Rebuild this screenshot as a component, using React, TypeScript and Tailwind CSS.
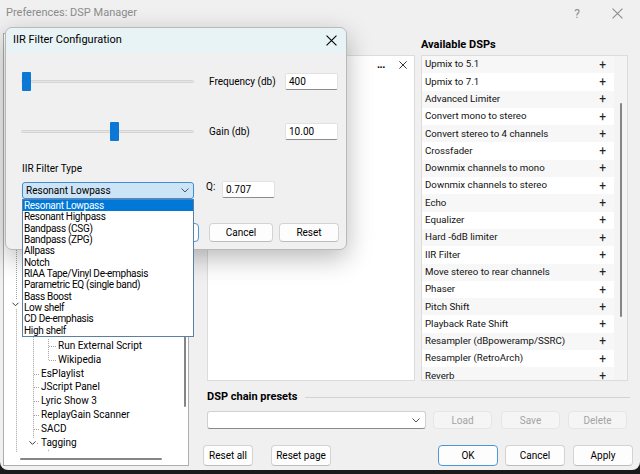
import React from 'react';

const availableDsps = [
  'Upmix to 5.1',
  'Upmix to 7.1',
  'Advanced Limiter',
  'Convert mono to stereo',
  'Convert stereo to 4 channels',
  'Crossfader',
  'Downmix channels to mono',
  'Downmix channels to stereo',
  'Echo',
  'Equalizer',
  'Hard -6dB limiter',
  'IIR Filter',
  'Move stereo to rear channels',
  'Phaser',
  'Pitch Shift',
  'Playback Rate Shift',
  'Resampler (dBpoweramp/SSRC)',
  'Resampler (RetroArch)',
  'Reverb',
];

const filterTypes = [
  'Resonant Lowpass',
  'Resonant Highpass',
  'Bandpass (CSG)',
  'Bandpass (ZPG)',
  'Allpass',
  'Notch',
  'RIAA Tape/Vinyl De-emphasis',
  'Parametric EQ (single band)',
  'Bass Boost',
  'Low shelf',
  'CD De-emphasis',
  'High shelf',
];

type TreeRow = { label: string; depth: 0 | 1 | 2 };

// the first 22 rows are hidden under the dialog and its dropdown, so they stay blank
const treeRows: TreeRow[] = [
  ...Array.from({ length: 22 }, () => ({ label: '', depth: 0 as const })),
  { label: 'Run External Script', depth: 2 },
  { label: 'Wikipedia', depth: 2 },
  { label: 'EsPlaylist', depth: 1 },
  { label: 'JScript Panel', depth: 1 },
  { label: 'Lyric Show 3', depth: 1 },
  { label: 'ReplayGain Scanner', depth: 1 },
  { label: 'SACD', depth: 1 },
  { label: 'Tagging', depth: 1 },
  { label: '', depth: 2 },
];

const indent = ['pl-[20px]', 'pl-[37px]', 'pl-[54px]'];

const ROW = 13.86;
const rowMid = (i: number) => ROW * i + ROW / 2;

const CloseIcon = ({ className = '' }: { className?: string }) => (
  <svg width="10" height="10" viewBox="0 0 10 10" className={className}>
    <path d="M0.5 0.5 L9.5 9.5 M9.5 0.5 L0.5 9.5" stroke="currentColor" strokeWidth="1" fill="none" />
  </svg>
);

const Chevron = ({ className = '' }: { className?: string }) => (
  <svg width="8" height="5" viewBox="0 0 8 5" className={className}>
    <path d="M0.5 0.5 L4 4 L7.5 0.5" stroke="currentColor" strokeWidth="1" fill="none" />
  </svg>
);

function TreeLines() {
  const dot = { stroke: '#a3a3a3', strokeWidth: 1, strokeDasharray: '1 1', fill: 'none' };
  const leaf1 = [24, 25, 26, 27, 28];
  const leaf2 = [22, 23];
  return (
    <svg className="pointer-events-none absolute left-0 top-0" width="180" height="418">
      <path d={`M12.5 0 V${rowMid(19) - 5} M12.5 ${rowMid(19) + 5} V418`} {...dot} />
      <path d={`M8.5 ${rowMid(19) - 1.5} L11.5 ${rowMid(19) + 1.5} L14.5 ${rowMid(19) - 1.5}`} stroke="#3a3a3a" strokeWidth="1" fill="none" />
      <path d={`M29.5 ${ROW * 20} V${rowMid(29) - 5}`} {...dot} />
      {leaf1.map((i) => (
        <path key={i} d={`M30 ${Math.round(rowMid(i)) + 0.5} H36`} {...dot} />
      ))}
      <path d={`M25.5 ${rowMid(29) - 1.5} L28.5 ${rowMid(29) + 1.5} L31.5 ${rowMid(29) - 1.5}`} stroke="#3a3a3a" strokeWidth="1" fill="none" />
      <path d={`M33 ${Math.round(rowMid(29)) + 0.5} H35`} {...dot} />
      <path d={`M44.5 ${ROW * 22} V${rowMid(23)}`} {...dot} />
      {leaf2.map((i) => (
        <path key={i} d={`M45 ${Math.round(rowMid(i)) + 0.5} H52`} {...dot} />
      ))}
      <path d={`M44.5 ${ROW * 30} V418`} {...dot} />
    </svg>
  );
}

function Tree() {
  return (
    <div className="mb-[4px] ml-[3px] mt-[6px] flex w-[186px] shrink-0 flex-col border border-[#adadad] bg-white">
      <div className="flex min-h-0 flex-1">
        <div className="relative min-w-0 flex-1 overflow-hidden">
          <TreeLines />
          {treeRows.map((r, i) => (
            <div
              key={i}
              className={`flex h-[13.86px] items-center whitespace-nowrap text-[10px] leading-none ${indent[r.depth]}`}
            >
              {r.label}
            </div>
          ))}
        </div>
        <div className="w-[5px] shrink-0">
          <div className="ml-[1px] mt-[216px] h-[157px] w-[2px] rounded-full bg-[#858585]" />
        </div>
      </div>
      <div className="flex h-[13px] shrink-0 items-center pl-[16px]">
        <div className="h-[2px] w-[142px] rounded-full bg-[#858585]" />
      </div>
    </div>
  );
}

function Btn({
  children,
  className = '',
  disabled = false,
  focused = false,
}: {
  children: React.ReactNode;
  className?: string;
  disabled?: boolean;
  focused?: boolean;
}) {
  const look = disabled
    ? 'border-[#e6e6e6] bg-[#f5f5f5] text-[#a3a3a3]'
    : focused
      ? 'border-[#4c98d6] bg-[#fdfdfd] text-black'
      : 'border-[#d3d3d3] border-b-[#bcbcbc] bg-[#fdfdfd] text-black';
  return (
    <div className={`flex shrink-0 items-center justify-center rounded-[4px] border text-[10px] ${look} ${className}`}>
      {children}
    </div>
  );
}

function RightPane() {
  return (
    <div className="flex min-w-0 flex-1 flex-col pl-[14px] pr-[7px]">
      <div className="flex gap-[6px] pl-[4px] pt-[11px]">
        <div className="w-[208px] shrink-0">
          {/* "Active DSPs" label and the active row's name sit under the dialog */}
          <div className="mb-[3px] h-[14px]" />
          <div className="h-[326px] border border-[#dcdcdc] bg-white">
            <div className="flex h-[17.3px] items-center justify-end pr-[7px]">
              <span className="mr-[14px] text-[11px] font-bold leading-none tracking-[-0.5px]">...</span>
              <CloseIcon className="h-[8px] w-[8px]" />
            </div>
          </div>
        </div>
        <div className="w-[207px] shrink-0">
          <div className="mb-[3px] h-[14px] text-[11px] font-bold leading-[14px]">Available DSPs</div>
          <div className="flex h-[326px] overflow-hidden border border-[#dcdcdc] bg-white">
            <div className="min-w-0 flex-1">
              {availableDsps.map((d, i) => (
                <div
                  key={d}
                  className={`flex h-[17.3px] shrink-0 items-center pl-[3px] pr-[8px] text-[9.7px] text-[#111] ${i % 2 === 0 ? 'bg-[#f7f7f7]' : 'bg-white'}`}
                >
                  <span className="flex-1 whitespace-nowrap">{d}</span>
                  <span className="text-[12px] leading-none text-[#222]">+</span>
                </div>
              ))}
            </div>
            <div className="w-[13px] shrink-0 bg-[#f4f4f4]">
              <div className="ml-[6px] mt-[47px] h-[214px] w-[2px] rounded-full bg-[#858585]" />
            </div>
          </div>
        </div>
      </div>

      <div className="mt-[9px] flex h-[14px] items-center gap-[8px] pl-[4px] pr-[3px]">
        <span className="whitespace-nowrap text-[11px] font-bold">DSP chain presets</span>
        <div className="h-px flex-1 bg-[#d2d2d2]" />
      </div>

      <div className="mt-[7px] flex h-[18px] pl-[4px]">
        <div className="flex w-[219px] items-center justify-end rounded-[3px] border border-[#d0d0d0] border-b-[#8a8a8a] bg-white pr-[5px] text-[#555]">
          <Chevron />
        </div>
        <Btn disabled className="ml-[7px] w-[59px]">Load</Btn>
        <Btn disabled className="ml-[9px] w-[59px]">Save</Btn>
        <Btn disabled className="ml-[8px] w-[59px]">Delete</Btn>
      </div>

      <div className="mt-[16px] flex h-[21px]">
        <Btn className="w-[50px]">Reset all</Btn>
        <Btn className="ml-[18px] w-[60px]">Reset page</Btn>
        <Btn focused className="ml-auto w-[60px]">OK</Btn>
        <Btn className="ml-[7px] w-[60px]">Cancel</Btn>
        <Btn className="ml-[8px] w-[60px]">Apply</Btn>
      </div>
    </div>
  );
}

function Slider({ thumb }: { thumb: 'left' | 'mid' }) {
  return (
    <div className="relative h-full w-[173px] shrink-0">
      <div className="absolute left-0 right-0 top-[8px] h-[3px] rounded-full border border-[#d4d4d4] bg-[#e6e6e6]" />
      <div
        className={`absolute top-0 h-[19px] w-[9px] rounded-[1px] bg-[#0a78d4] ${thumb === 'left' ? 'left-[1px]' : 'left-[89px]'}`}
      />
    </div>
  );
}

function Field({ value }: { value: string }) {
  return (
    <div className="flex h-[17px] w-[53px] shrink-0 items-center rounded-[2px] border border-[#e2e2e2] border-b-[#8c8c8c] bg-white pl-[3px] text-[10px]">
      {value}
    </div>
  );
}

function IirDialog() {
  return (
    <div className="absolute left-[5px] top-[27px] h-[223px] w-[342px] rounded-[7px] border border-[#b9b9b9] bg-[#f0f0f0] shadow-[0_8px_26px_rgba(0,0,0,0.28)]">
      <div className="flex h-[25px] items-center rounded-t-[7px] bg-[#e8f3f6] pl-[7px] pr-[9px] text-[11px]">
        <span>IIR Filter Configuration</span>
        <CloseIcon className="ml-auto h-[11px] w-[11px]" />
      </div>

      <div className="ml-[15px] mt-[19px] flex h-[19px] items-center">
        <Slider thumb="left" />
        <span className="ml-[15px] w-[76px] shrink-0 text-[10px]">Frequency (db)</span>
        <Field value="400" />
      </div>

      <div className="ml-[15px] mt-[31px] flex h-[19px] items-center">
        <Slider thumb="mid" />
        <span className="ml-[15px] w-[76px] shrink-0 text-[10px]">Gain (db)</span>
        <Field value="10.00" />
      </div>

      <div className="mt-[21px] h-[14px] pl-[16px] text-[10px] leading-[14px]">IIR Filter Type</div>

      <div className="mt-[5px] flex h-[18px] items-start">
        <div className="ml-[16px] mt-[1px] flex h-[17px] w-[172px] shrink-0 items-center rounded-[3px] border border-[#3d8ed6] bg-[#cde4f6] pl-[3px] pr-[4px] text-[10px]">
          <span className="flex-1">Resonant Lowpass</span>
          <Chevron className="text-[#555]" />
        </div>
        <span className="ml-[12px] mt-[-1px] w-[16px] shrink-0 text-[10px] leading-[14px]">Q:</span>
        <Field value="0.707" />
      </div>

      <div className="mt-[24px] flex h-[19px]">
        <Btn focused className="ml-[131px] w-[62px]" />
        <Btn className="ml-[10px] w-[64px]">Cancel</Btn>
        <Btn className="ml-[6px] w-[60px]">Reset</Btn>
      </div>

      <div className="absolute left-[16px] top-[171px] z-10 h-[138px] w-[172px] border border-[#5b7fa6] bg-white">
        {filterTypes.map((t, i) => (
          <div
            key={t}
            className={`h-[11.35px] whitespace-nowrap pl-[1px] text-[10px] leading-[11.35px] tracking-[-0.3px] ${i === 0 ? 'bg-[#0078d7] text-white' : 'text-black'}`}
          >
            {t}
          </div>
        ))}
      </div>
    </div>
  );
}

export default function App() {
  return (
    <div className="relative h-[474px] w-[640px] overflow-hidden bg-[#1b1b1b] font-['Roboto',sans-serif] text-black">
      <div className="flex h-[470px] flex-col rounded-b-[8px] bg-[#f0f0f0]">
        <div className="flex h-[27px] shrink-0 items-center pl-[6px] text-[11px] text-[#8c8c8c]">
          <span>Preferences: DSP Manager</span>
          <span className="ml-auto text-[12px]">?</span>
          <CloseIcon className="ml-[32px] mr-[17px] h-[11px] w-[11px]" />
        </div>
        <div className="flex min-h-0 flex-1">
          <Tree />
          <RightPane />
        </div>
      </div>
      <IirDialog />
    </div>
  );
}
